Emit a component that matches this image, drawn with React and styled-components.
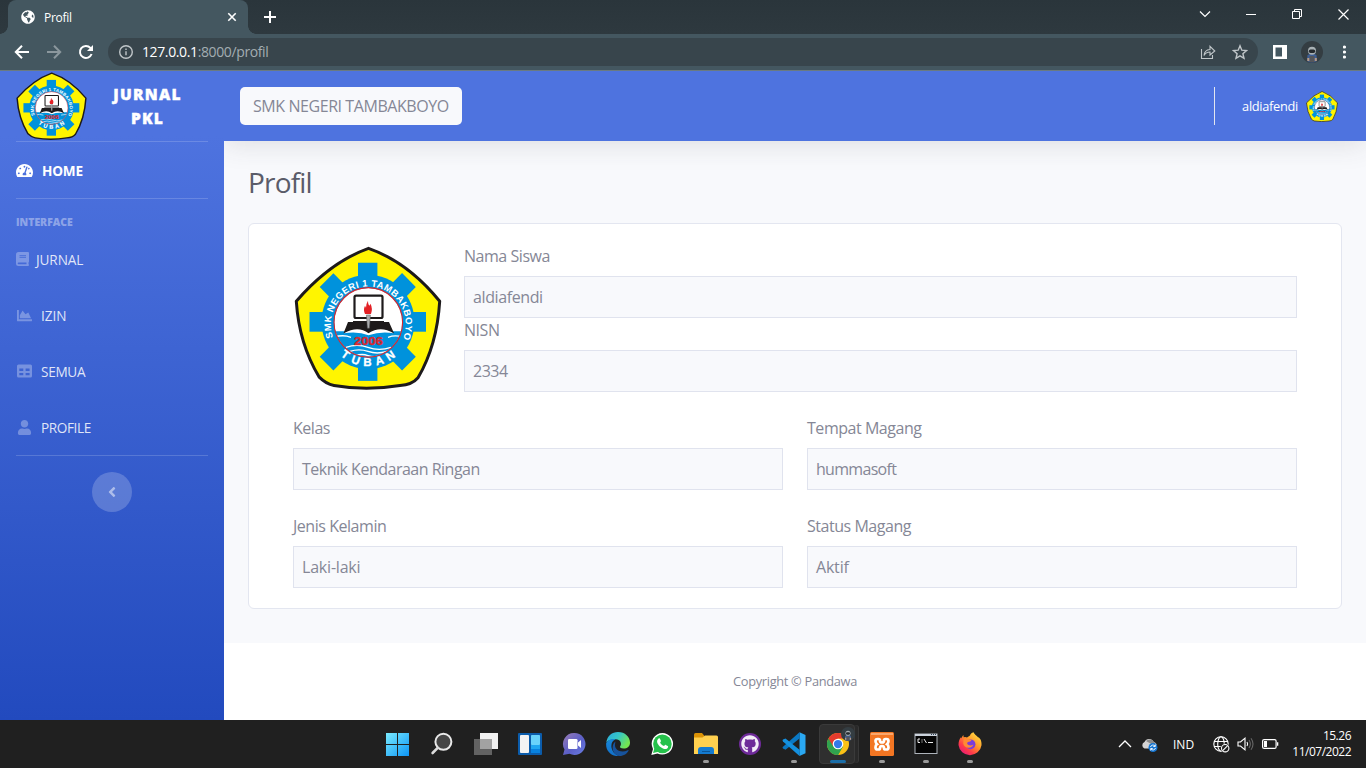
import React from "react";
import styled, { createGlobalStyle } from "styled-components";
import {
  FaTachometerAlt, FaChartArea, FaUser, FaAngleLeft,
  FaGlobeAmericas, FaGithub,
} from "react-icons/fa";

const Global = createGlobalStyle`
  *, *::before, *::after { box-sizing: border-box; }
  body { margin: 0; overflow: hidden; }
  #root { font-family: "Open Sans", "Noto Sans", "Liberation Sans", sans-serif; }
  svg { display: block; flex: none; }
`;

const Screen = styled.div`
  width: 1366px;
  height: 768px;
  display: flex;
  flex-direction: column;
  overflow: hidden;
  background: #fff;
`;

/* ---------- browser ---------- */
const TabStrip = styled.div`
  height: 34px;
  display: flex;
  align-items: flex-start;
  justify-content: space-between;
  background: linear-gradient(#2a353b, #2e393f);
`;
const TabGroup = styled.div`
  display: flex;
  align-items: center;
  height: 34px;
  padding-left: 8px;
`;
const Tab = styled.div`
  width: 240px;
  height: 34px;
  padding: 0 10px 0 13px;
  display: flex;
  align-items: center;
  border-radius: 8px 8px 0 0;
  background: #445760;
  color: #fff;
  position: relative;
  &::before, &::after {
    content: "";
    position: absolute;
    bottom: 0;
    width: 8px;
    height: 8px;
  }
  &::before { left: -8px; background: radial-gradient(circle at 0 0, transparent 7.5px, #445760 8px); }
  &::after { right: -8px; background: radial-gradient(circle at 100% 0, transparent 7.5px, #445760 8px); }
`;
const TabTitle = styled.span`
  flex: 1;
  margin-left: 9px;
  font-size: 12px;
  letter-spacing: -0.3px;
`;
const NewTab = styled.div`
  margin-left: 15px;
`;
const WindowButtons = styled.div`
  display: flex;
  align-items: center;
  height: 28px;
`;
const WindowButton = styled.div`
  width: 46px;
  display: flex;
  justify-content: center;
`;
const Toolbar = styled.div`
  height: 37px;
  display: flex;
  align-items: center;
  padding: 0 14px 1px;
  background: #445760;
  border-bottom: 1px solid #6a7a81;
`;
const NavButtons = styled.div`
  display: flex;
  gap: 16px;
  width: 94px;
`;
const AddressBar = styled.div`
  width: 1150px;
  height: 28px;
  border-radius: 14px;
  background: #38454c;
  display: flex;
  align-items: center;
  padding: 0 10px;
  gap: 8px;
`;
const Url = styled.div`
  flex: 1;
  font-size: 14px;
  letter-spacing: -0.38px;
  color: #a3adb2;
  b { font-weight: 400; color: #fff; }
`;
const BarIcons = styled.div`
  display: flex;
  gap: 16px;
`;
const ToolbarEnd = styled.div`
  display: flex;
  align-items: center;
  margin-left: 14px;
`;
const BrowserAvatar = styled.div`
  margin: 0 20px 0 14px;
`;

/* ---------- page ---------- */
const Page = styled.div`
  height: 649px;
  display: flex;
  overflow: hidden;
`;
const Sidebar = styled.aside`
  width: 224px;
  display: flex;
  flex-direction: column;
  background: linear-gradient(180deg, #4e73df 10%, #224abe 100%);
  position: relative;
  z-index: 1;
`;
const Brand = styled.div`
  height: 70px;
  padding: 0 16px;
  display: flex;
  align-items: center;
  color: #fff;
`;
const BrandName = styled.div`
  flex: 1;
  text-align: center;
  font-size: 15.5px;
  font-weight: 800;
  line-height: 24px;
  letter-spacing: 1.25px;
  -webkit-text-stroke: 0.4px #fff;
`;
const Divider = styled.hr`
  flex: none;
  width: 192px;
  height: 1px;
  margin: 0 16px;
  border: 0;
  background: rgba(255, 255, 255, 0.17);
`;
const NavItem = styled.a`
  height: 56px;
  padding: 0 16px 0 ${(p) => (p.$indent ? 17 : 16)}px;
  display: flex;
  align-items: center;
  gap: ${(p) => p.$gap || 8}px;
  font-size: 13.6px;
  letter-spacing: ${(p) => p.$spacing ?? -0.3}px;
  font-weight: ${(p) => (p.$active ? 700 : 400)};
  color: ${(p) => (p.$active ? "#fff" : "rgba(255,255,255,.85)")};
  svg { color: ${(p) => (p.$active ? "#fff" : "rgba(255,255,255,.3)")}; }
`;
const SidebarHeading = styled.div`
  height: 32px;
  padding: 16px 16px 0;
  font-size: 10.4px;
  line-height: 15px;
  font-weight: 800;
  color: rgba(255, 255, 255, 0.4);
`;
const Collapse = styled.button`
  width: 40px;
  height: 40px;
  margin: 16px auto 0;
  padding: 0;
  border: 0;
  border-radius: 50%;
  background: rgba(255, 255, 255, 0.2);
  color: rgba(255, 255, 255, 0.5);
  display: flex;
  align-items: center;
  justify-content: center;
`;
const Content = styled.div`
  flex: 1;
  display: flex;
  flex-direction: column;
`;
const Topbar = styled.header`
  height: 70px;
  flex: none;
  padding: 0 28px 0 16px;
  display: flex;
  align-items: center;
  background: #4e73df;
  box-shadow: 0 2.4px 28px rgba(58, 59, 69, 0.15);
  z-index: 0;
`;
const SchoolName = styled.div`
  width: 222px;
  height: 38px;
  border-radius: 5px;
  background: #f8f9fc;
  color: #858796;
  font-size: 16px;
  line-height: 39px;
  padding-left: 13px;
  letter-spacing: -0.43px;
  white-space: nowrap;
`;
const UserArea = styled.div`
  margin-left: auto;
  display: flex;
  align-items: center;
  height: 38px;
  padding-left: 27px;
  border-left: 1px solid #e3e6f0;
  color: #fff;
  font-size: 12.8px;
  letter-spacing: -0.3px;
  gap: 8px;
`;
const Main = styled.main`
  height: 502px;
  padding: 24px;
  background: #f8f9fc;
`;
const Title = styled.h1`
  margin: 0 0 24px;
  font-size: 28px;
  line-height: 34px;
  font-weight: 400;
  letter-spacing: -0.8px;
  color: #5a5c69;
`;
const Card = styled.section`
  height: 386px;
  padding: 20px 44px;
  border: 1px solid #e3e6f0;
  border-radius: 6px;
  background: #fff;
`;
const Identity = styled.div`
  display: flex;
  height: 172px;
`;
const Photo = styled.div`
  width: 171px;
  padding: 2px 0 0 1px;
`;
const Stack = styled.div`
  flex: 1;
`;
const Columns = styled.div`
  display: grid;
  grid-template-columns: 1fr 1fr;
  gap: 24px;
`;
const FieldBox = styled.label`
  display: block;
  font-size: 16px;
  line-height: 24px;
  letter-spacing: -0.46px;
  color: #858796;
`;
const Value = styled.div`
  height: 42px;
  margin-top: 8px;
  padding-left: 8px;
  line-height: 41px;
  border: 1px solid #e0e3ee;
  background: #f8f9fc;
  letter-spacing: ${(p) => p.$spacing ?? -0.5}px;
`;
const Footer = styled.footer`
  flex: 1;
  display: flex;
  align-items: center;
  justify-content: center;
  padding-bottom: 2px;
  background: #fff;
  color: #858796;
  font-size: 12.8px;
  letter-spacing: -0.3px;
`;

const Field = ({ label, value, spacing }) => (
  <FieldBox>{label}<Value $spacing={spacing}>{value}</Value></FieldBox>
);

const BookIcon = () => (
  <svg width="13" height="14" viewBox="0 0 13 14" fill="currentColor">
    <path fillRule="evenodd" d="M2.500 0H12q1 0 1 1v8.500q0 .6-.5.900v1.800q.5.200.5.800 0 1-1 1H2.500Q0 14 0 11.500v-9Q0 0 2.500 0zM3.500 3.300v.9h6.500v-.9zM3.500 5.200v.9h6.500v-.9zM2.500 10.600a.8.800 0 0 0 0 1.600H10.500v-1.600z" />
  </svg>
);
const TableIcon = () => (
  <svg width="15" height="14" viewBox="0 0 15 14" fill="currentColor">
    <path fillRule="evenodd" d="M1.500.500h12q1.500 0 1.500 1.500v10q0 1.500-1.500 1.500h-12Q0 13.500 0 12V2Q0 .5 1.500.500zM2.300 4.500v2.500h4V4.500zM8.600 4.500v2.500h4V4.500zM2.300 9v2.300h4V9zM8.600 9v2.300h4V9z" />
  </svg>
);

const Emblem = ({ id, width, height }) => (
  <svg width={width} height={height} viewBox="294 247 148 142" preserveAspectRatio="none">
    <defs>
      <path id={`${id}-top`} d="M333.200 337.200 A37.400 37.400 0 1 1 403.400 337.200" />
      <path id={`${id}-bottom`} d="M337.500 352.500 A43.500 43.500 0 0 0 399.500 352.500" />
      <clipPath id={`${id}-disc`}><circle cx="368.300" cy="322.300" r="34" /></clipPath>
    </defs>
    <path d="M368.500 249.300 Q408 263 439.700 301.500 Q437 345 418 377 Q412 384 400 384.500 Q366 390 334 384.500 Q326 383 319 376 Q299 343 296.300 301.500 Q330 263 368.500 249.300Z"
      fill="#fff500" stroke="#1d1a1b" strokeWidth="3" strokeLinejoin="round" />
    <g fill="#0092dc">
      {[0, 45, 90, 135].map((a) => (
        <rect key={a} x="358" y="263.500" width="19.400" height="116.500" transform={`rotate(${a} 367.700 321.800)`} />
      ))}
      <circle cx="368" cy="321.800" r="46.500" />
    </g>
    <circle cx="368.300" cy="322.300" r="34" fill="#fff" />
    <g clipPath={`url(#${id}-disc)`}>
      <path d="M330 331h77v30h-77z" fill="#0092dc" />
      <g fill="none" stroke="#fff" strokeWidth="1.300">
        <path d="M334 337q9-3 17 0M388 337q9-3 17 1M346 347q11-4 22 0t23 0M350 351q9-3 18 0t19 0M356 355q6-2 12 0t14 0" />
      </g>
      <rect x="354.500" y="296" width="28" height="22" rx="1.500" fill="#fff" stroke="#1d1a1b" strokeWidth="2.200" />
      <path d="M353 321h31v2h-31z" fill="#1d1a1b" />
      <path d="M348 322h41l5 11q-14-4-25.500 0-12-4-25 0z" fill="#1d1a1b" />
      <path d="M344 333q14-8 24.500 0 12-8 25 0-13-2-25 2-10-4-24.500-2z" fill="#fff" />
    </g>
    <path d="M366.400 315h4l-1 13h-2z" fill="#a9abae" stroke="#555" strokeWidth=".5" />
    <path d="M365 314q-2-4 0-8l1 2q0-4 2-7 0 4 1.500 5l1-2q2.500 5 .5 10z" fill="#e32126" />
    <circle cx="368.300" cy="322.300" r="34.300" fill="none" stroke="#d7282f" strokeWidth="1.100" />
    <g fontFamily="Liberation Sans, Arial, sans-serif" fontWeight="700">
      <text x="354" y="345" fontSize="11" fill="#d7282f" stroke="#d7282f" strokeWidth=".4" textLength="29" lengthAdjust="spacingAndGlyphs">2006</text>
      <text fontSize="9.300" fill="#fff" letterSpacing="0">
        <textPath href={`#${id}-top`} textLength="145">SMK NEGERI 1 TAMBAKBOYO</textPath>
      </text>
      <text fontSize="11.500" fill="#fff" stroke="#fff" strokeWidth=".3">
        <textPath href={`#${id}-bottom`} startOffset="4" textLength="60">TUBAN</textPath>
      </text>
    </g>
  </svg>
);

const Astronaut = ({ size }) => (
  <svg width={size} height={size} viewBox="0 0 22 22">
    <circle cx="11" cy="11" r="11" fill="#343d42" />
    <path d="M6.500 14q4.500-3 9 0l.5 6q-5 3-10 0z" fill="#3e5f96" />
    <path d="M8.500 15h5v6h-5z" fill="#54565b" />
    <circle cx="11" cy="9.800" r="4" fill="#a9b1b5" />
    <rect x="7.800" y="8.400" width="6.400" height="3.600" rx="1.700" fill="#252a2e" />
    <path d="M6.300 17h2v3h-2zM13.800 17h2v3h-2z" fill="#b89b86" />
  </svg>
);

/* ---------- taskbar ---------- */
const Taskbar = styled.div`
  height: 48px;
  display: flex;
  align-items: center;
  padding: 0 15px 0 376px;
  background: #202020;
  color: #fff;
`;
const Apps = styled.div`
  display: flex;
`;
const AppSlot = styled.div`
  width: 44px;
  height: 48px;
  display: flex;
  align-items: center;
  justify-content: center;
  position: relative;
  &::after {
    content: "";
    position: absolute;
    bottom: 5px;
    left: 50%;
    transform: translateX(-50%);
    width: ${(p) => (p.$active ? 16 : 6)}px;
    height: 3px;
    border-radius: 2px;
    background: ${(p) => (p.$active ? "#1b6ea8" : "#9a9a9a")};
    display: ${(p) => (p.$active || p.$open ? "block" : "none")};
  }
`;
const ActiveTile = styled.div`
  width: 36px;
  height: 40px;
  margin-left: -2px;
  border-radius: 4px;
  background: #2f2f2f;
  border: 1px solid #3a3a3a;
  box-shadow: 4px 0 0 -1px #292929, 5px 0 0 -1px #383838;
  display: flex;
  align-items: center;
  justify-content: center;
  padding-left: 2px;
`;
const AppBadge = styled.div`
  position: absolute;
  top: 7px;
  right: 5px;
`;
const Tray = styled.div`
  margin-left: auto;
  display: flex;
  align-items: center;
`;
const TrayItem = styled.div`
  margin-right: ${(p) => p.$after}px;
`;
const Language = styled.div`
  width: 22px;
  margin-right: 18px;
  font-size: 12px;
  white-space: nowrap;
`;
const Clock = styled.div`
  width: 63px;
  text-align: right;
  font-size: 12px;
  line-height: 16px;
  letter-spacing: -0.5px;
  white-space: nowrap;
`;

const StartIcon = () => (
  <svg width="24" height="24" viewBox="0 0 24 24">
    <defs><linearGradient id="win" x1="0" y1="0" x2="24" y2="24" gradientUnits="userSpaceOnUse">
      <stop offset="0" stopColor="#7cecff" /><stop offset="1" stopColor="#0a93f5" />
    </linearGradient></defs>
    <path d="M0 1h11v11H0zM12 1h11v11H12zM0 13h11v11H0zM12 13h11v11H12z" fill="url(#win)" />
  </svg>
);
const SearchIcon = () => (
  <svg width="24" height="24" viewBox="0 0 24 24" fill="none">
    <circle cx="13.400" cy="9.800" r="8" fill="#454545" stroke="#e9e9e9" strokeWidth="2" />
    <path d="M7.700 15.800 2.600 21" stroke="#dcdcdc" strokeWidth="2.600" strokeLinecap="round" />
  </svg>
);
const TaskViewIcon = () => (
  <svg width="24" height="24" viewBox="0 0 24 24">
    <rect x="6" y="1" width="18" height="16" fill="#f1f1f1" />
    <rect x="0" y="7" width="18" height="16" fill="#626262" />
    <rect x="6" y="7" width="12" height="10" fill="#a2a2a2" />
  </svg>
);
const WidgetsIcon = () => (
  <svg width="24" height="24" viewBox="0 0 24 24">
    <rect y="1" width="24" height="22" rx="1" fill="#0b5cab" />
    <rect x="2" y="3" width="9" height="18" rx="1" fill="#f3f3f3" />
    <rect x="13" y="3" width="9" height="10" rx=".7" fill="#69d3fb" />
    <path d="M13 13h9v4h-9z" fill="#1fa6f0" /><path d="M13 17h9v4h-9z" fill="#0882df" />
  </svg>
);
const ChatIcon = () => (
  <svg width="24" height="24" viewBox="0 0 24 24">
    <defs><linearGradient id="chat" x1="0" y1="0" x2="1" y2="1">
      <stop offset="0" stopColor="#9a7cb5" /><stop offset=".55" stopColor="#5b5fc7" /><stop offset="1" stopColor="#6a7fe5" />
    </linearGradient></defs>
    <path d="M12.500 1a11 11 0 1 1-5 20.800L1 23l1.500-5.500A11 11 0 0 1 12.500 1z" fill="url(#chat)" />
    <rect x="6" y="7" width="9.500" height="10" rx="1.300" fill="#fff" />
    <path d="m16 10.500 3-2.500v8l-3-2.500z" fill="#fff" />
  </svg>
);
const EdgeIcon = () => (
  <svg width="24" height="24" viewBox="0 0 24 24">
    <defs>
      <linearGradient id="edge1" x1="0" y1="0" x2="1" y2=".5">
        <stop offset="0" stopColor="#2aa9df" /><stop offset=".5" stopColor="#35c6c8" /><stop offset="1" stopColor="#74e750" />
      </linearGradient>
      <linearGradient id="edge2" x1="0" y1="0" x2="0" y2="1">
        <stop offset="0" stopColor="#1787d8" /><stop offset="1" stopColor="#1270ca" />
      </linearGradient>
    </defs>
    <path d="M.3 10.500C1.200 4 6 0 12 0c7 0 12 5 12 10.500 0 4-2.800 6-6.300 6-3.200 0-4.300-1.100-3.500-2.200 2-2.600.2-7-4.400-7C5.500 7.300 2 8.500.3 10.500z" fill="url(#edge1)" />
    <path d="M.2 11C2 7.500 6 6.500 9.500 7.300 6 9 5 12 5.500 15.500 6.300 20 9.500 23 13.500 24 5 25-.7 18.500.2 11z" fill="url(#edge2)" />
    <path d="M9.500 9.500c-5 3.500-3.500 13.500 4 14.500 4.500 0 7.500-2.500 9-5.300.3-.7-.2-.9-.8-.5-6 2.800-12.700.5-12.700-5.200 0-1.300.2-2.500.5-3.500z" fill="#17539c" />
  </svg>
);
const WhatsAppIcon = () => (
  <svg width="24" height="24" viewBox="0 0 24 24">
    <path d="M12.500 1a10.800 10.800 0 1 1-5 20.500L1.300 23 3 17A10.800 10.800 0 0 1 12.500 1z" fill="#fff" />
    <circle cx="12.400" cy="11.900" r="9.300" fill="#25c24b" /><path d="m3 21 1.500-5 4 3.700z" fill="#25c24b" />
    <path d="M8.600 6.600c.6-.5 1.200-.4 1.500.3l.8 1.800c.2.500-.1.900-.8 1.700.8 1.700 2.200 3 4 3.700.8-1 1.100-1.400 1.600-1.200l2 1c.6.300.5.900.2 1.600-.6 1.300-2.100 1.800-3.600 1.400-3.600-.9-6.800-4-7.200-7.100-.1-1.300.5-2.400 1.500-3.200z" fill="#fff" />
  </svg>
);
const FolderIcon = () => (
  <svg width="24" height="24" viewBox="0 0 24 24">
    <path d="M0 2.500Q0 1 1.500 1H8l2.500 3v4H0z" fill="#db9205" />
    <path d="M0 5.500h8.500L11 3.500h11.500Q24 3.500 24 5v17H0z" fill="#ffd04f" />
    <path d="M4 22v-4q0-3 3-3h10q3 0 3 3v4z" fill="#147bd1" /><path d="M8 19h8v1H8z" fill="#0c5596" />
  </svg>
);
const GithubBadge = styled.div`
  width: 22px;
  height: 22px;
  border-radius: 50%;
  display: flex;
  align-items: center;
  justify-content: center;
  background: #6e2a99;
  color: #f3ecf7;
`;
const CodeIcon = () => (
  <svg width="24" height="24" viewBox="0 0 24 24">
    <path d="m17.500.2 6 2.700v18.300l-6 2.700z" fill="#2aa8f2" />
    <path d="m17.500.2.3 6L3.500 17.700 1 16.500q-1-.8 0-1.800z" fill="#0a78c4" />
    <path d="m17.500 23.900.3-6L3.500 6.400 1 7.600q-1 .8 0 1.800z" fill="#1490df" />
  </svg>
);
const ChromeIcon = () => (
  <svg width="22" height="22" viewBox="0 0 24 24">
    <circle cx="12" cy="12" r="12" fill="#fbc116" />
    <path d="M12 12 1.600 6A12 12 0 0 0 12 24l5.200-9z" fill="#30a34f" />
    <path d="M1.600 6a12 12 0 0 1 20.800 0H12l-5 9z" fill="#e33b2e" />
    <path d="M12 24l5.200-9L12 12l-5 3z" fill="#30a34f" />
    <circle cx="12" cy="12" r="5.800" fill="#fff" /><circle cx="12" cy="12" r="4.500" fill="#3479ea" />
  </svg>
);
const XamppIcon = () => (
  <svg width="24" height="24" viewBox="0 0 24 24">
    <rect width="24" height="24" rx="1.500" fill="#f37623" /><path d="M1 1h22v2H1z" fill="#f9a66c" />
    <path d="M7.500 7h1q1.500 0 1.500 1.500 0 2 2 2t2-2Q14 7 15.500 7h1q2 0 2 2 0 1.800-1.500 3.200 1.500 1 1.500 3 0 2.300-2 2.300h-1q-1.500 0-1.500-1.500 0-2-2-2t-2 2q0 1.500-1.500 1.500h-1q-2 0-2-2.300 0-2 1.500-3Q5.500 10.800 5.500 9q0-2 2-2z" fill="none" stroke="#fff" strokeWidth="2.700" />
  </svg>
);
const TerminalIcon = () => (
  <svg width="24" height="24" viewBox="0 0 24 24">
    <rect x="1" y="2" width="22" height="19.500" fill="#050505" stroke="#aeb4bb" />
    <path d="M1 2h22v2H1z" fill="#cbd2db" /><path d="M17 2.500h1M19 2.500h1M21 2.500h1" stroke="#345" />
    <path d="M6 7H4v3.500h2M8 7.500v1M8 9.500v1M10 7l2.500 4M14 10.500h5" stroke="#eee" fill="none" />
  </svg>
);
const FirefoxIcon = () => (
  <svg width="24" height="24" viewBox="0 0 24 24">
    <defs><linearGradient id="ff" x1="1" y1="0" x2=".2" y2="1">
      <stop offset="0" stopColor="#fff14a" /><stop offset=".45" stopColor="#ff9a2a" /><stop offset=".75" stopColor="#ff3b49" /><stop offset="1" stopColor="#e3187a" />
    </linearGradient></defs>
    <path d="M15.500.2c1 2.300 3 3.200 4.500 5 1.500-.2 4 3.500 3.500 8A11.600 11.600 0 0 1 .5 13c0-3.500 1-6 2.300-7.800L3 6.500 5.300 3l.4 2.200q1.800-.5 3.300.2l3-1.900c.2-1.500 1.800-2.900 3.500-3.300z" fill="url(#ff)" />
    <circle cx="12.500" cy="12.300" r="4.900" fill="#7a3ddb" />
    <path d="M5.700 6.500q3-1 4.500.8l3.300.7q-.7 2-3.500 2-2 1.700.5 3 2.500 1 5-.5-1 3-5 3.300-4.500-.4-5.300-4.300z" fill="#ff8a32" />
  </svg>
);

const apps = [
  { icon: <StartIcon /> }, { icon: <SearchIcon /> }, { icon: <TaskViewIcon /> },
  { icon: <WidgetsIcon /> }, { icon: <ChatIcon /> }, { icon: <EdgeIcon /> },
  { icon: <WhatsAppIcon /> }, { icon: <FolderIcon />, open: true },
  { icon: <GithubBadge><FaGithub size={18} /></GithubBadge> },
  { icon: <CodeIcon />, open: true },
  { icon: <ActiveTile><ChromeIcon /></ActiveTile>, active: true },
  { icon: <XamppIcon />, open: true }, { icon: <TerminalIcon />, open: true },
  { icon: <FirefoxIcon />, open: true },
];

export default function App() {
  return (
    <Screen>
      <Global />
      <TabStrip>
        <TabGroup>
          <Tab>
            <FaGlobeAmericas size={14} />
            <TabTitle>Profil</TabTitle>
            <svg width="12" height="12" viewBox="0 0 12 12" stroke="#fff" strokeWidth="1.600"><path d="m2.300 2.300 7.400 7.400M9.700 2.300 2.300 9.700" /></svg>
          </Tab>
          <NewTab><svg width="14" height="14" viewBox="0 0 14 14" stroke="#fff" strokeWidth="2"><path d="M7 1v12M1 7h12" /></svg></NewTab>
        </TabGroup>
        <WindowButtons>
          <WindowButton><svg width="12" height="8" viewBox="0 0 12 8" fill="none" stroke="#fff" strokeWidth="1.200"><path d="m1 1.500 5 5 5-5" /></svg></WindowButton>
          <WindowButton><svg width="10" height="10" viewBox="0 0 10 10" stroke="#fff"><path d="M0 5.500h10" /></svg></WindowButton>
          <WindowButton><svg width="10" height="10" viewBox="0 0 10 10" fill="none" stroke="#fff"><path d="M.5 2.500h7v7h-7zM2.500 2.500v-2h7v7h-2" /></svg></WindowButton>
          <WindowButton><svg width="11" height="11" viewBox="0 0 11 11" stroke="#fff" strokeWidth="1.200"><path d="m.5.500 10 10M10.500.5l-10 10" /></svg></WindowButton>
        </WindowButtons>
      </TabStrip>
      <Toolbar>
        <NavButtons>
          <svg width="16" height="16" viewBox="0 0 16 16" fill="none" stroke="#fff" strokeWidth="2"><path d="M15 8H2.500M8 1.800 1.800 8 8 14.200" /></svg>
          <svg width="16" height="16" viewBox="0 0 16 16" fill="none" stroke="#8b979d" strokeWidth="2"><path d="M1 8h12.500M8 1.800 14.200 8 8 14.200" /></svg>
          <svg width="16" height="16" viewBox="0 0 16 16" fill="none" stroke="#fff" strokeWidth="2"><path d="M13.600 10A6 6 0 1 1 12.400 3.900L14 5.500" /><path d="M15 1v6H9z" fill="#fff" stroke="none" /></svg>
        </NavButtons>
        <AddressBar>
          <svg width="16" height="16" viewBox="0 0 16 16" fill="none" stroke="#c0c6c9" strokeWidth="1.400"><circle cx="8" cy="8" r="6.300" /><path d="M8 7.200v4M8 4.500V6" /></svg>
          <Url><b>127.0.0.1</b>:8000/profil</Url>
          <BarIcons>
            <svg width="16" height="16" viewBox="0 0 16 16" fill="none" stroke="#c0c6c9" strokeWidth="1.100"><path d="M1.500 5v9.500h11V11" /><path d="M4 11.500q.5-5.500 6-6V2.300L14.800 7 10 11V8q-4 0-6 3.500z" /></svg>
            <svg width="16" height="16" viewBox="0 0 16 16" fill="none" stroke="#c0c6c9" strokeWidth="1.400"><path d="m8 1.800 1.800 4.400 4.700.4-3.600 3.100 1.100 4.600L8 11.800l-4 2.500 1.100-4.600L1.500 6.600l4.700-.4z" /></svg>
          </BarIcons>
        </AddressBar>
        <ToolbarEnd>
          <svg width="15" height="14" viewBox="0 0 15 14"><path d="M1 0h14v14H1zM3.500 2.500v9H10v-9z" fill="#fff" fillRule="evenodd" /></svg>
          <BrowserAvatar><Astronaut size={22} /></BrowserAvatar>
          <svg width="4" height="14" viewBox="0 0 4 14" fill="#fff"><circle cx="1.500" cy="2" r="1.600" /><circle cx="1.500" cy="7" r="1.600" /><circle cx="1.500" cy="12" r="1.600" /></svg>
        </ToolbarEnd>
      </Toolbar>

      <Page>
        <Sidebar>
          <Brand>
            <Emblem id="brand" width="71" height="68" />
            <BrandName>JURNAL<br />PKL</BrandName>
          </Brand>
          <Divider />
          <NavItem $active $gap={9} $spacing={-0.2}><FaTachometerAlt size={17} />HOME</NavItem>
          <Divider />
          <SidebarHeading>INTERFACE</SidebarHeading>
          <NavItem $gap={7} $spacing={-0.1}><BookIcon />JURNAL</NavItem>
          <NavItem $indent $gap={9} $spacing={0}><FaChartArea size={15} />IZIN</NavItem>
          <NavItem $indent $gap={9}><TableIcon />SEMUA</NavItem>
          <NavItem $indent $gap={9} $spacing={-0.4}><FaUser size={15} />PROFILE</NavItem>
          <Divider />
          <Collapse><FaAngleLeft size={16} /></Collapse>
        </Sidebar>
        <Content>
          <Topbar>
            <SchoolName>SMK NEGERI TAMBAKBOYO</SchoolName>
            <UserArea>aldiafendi<Emblem id="user" width="32" height="31" /></UserArea>
          </Topbar>
          <Main>
            <Title>Profil</Title>
            <Card>
              <Identity>
                <Photo><Emblem id="photo" width="148" height="144" /></Photo>
                <Stack>
                  <Field label="Nama Siswa" value="aldiafendi" spacing={-0.4} />
                  <Field label="NISN" value="2334" />
                </Stack>
              </Identity>
              <Columns>
                <Field label="Kelas" value="Teknik Kendaraan Ringan" />
                <Field label="Tempat Magang" value="hummasoft" spacing={-0.7} />
                <Field label="Jenis Kelamin" value="Laki-laki" spacing={-0.2} />
                <Field label="Status Magang" value="Aktif" spacing={-0.2} />
              </Columns>
            </Card>
          </Main>
          <Footer>Copyright © Pandawa</Footer>
        </Content>
      </Page>

      <Taskbar>
        <Apps>
          {apps.map((a, i) => (
            <AppSlot key={i} $open={a.open} $active={a.active}>
              {a.icon}
              {a.active && <AppBadge><Astronaut size={14} /></AppBadge>}
            </AppSlot>
          ))}
        </Apps>
        <Tray>
          <TrayItem $after={9}><svg width="14" height="8" viewBox="0 0 14 8" fill="none" stroke="#fff" strokeWidth="1.300"><path d="M1 7l6-6 6 6" /></svg></TrayItem>
          <TrayItem $after={15}>
            <svg width="17" height="16" viewBox="0 0 17 16">
              <path d="M3.500 12.500a3.500 3.500 0 0 1 0-6.500 5 5 0 0 1 9.200 0q3 1 3 3.500l-5 3z" fill="#d4d4d4" />
              <path d="M5 5a5 5 0 0 1 8 1l2 2-3 1z" fill="#8b8b8b" />
              <circle cx="12" cy="11.500" r="4.500" fill="#1676d2" />
              <path d="M9.500 11a2.600 2.600 0 0 1 4.500-1M14.500 12a2.600 2.600 0 0 1-4.500 1M14.300 8.500V10.500h-2M9.700 14.500v-2h2" fill="none" stroke="#fff" strokeWidth=".9" />
            </svg>
          </TrayItem>
          <Language>IND</Language>
          <TrayItem $after={7}>
            <svg width="17" height="17" viewBox="0 0 17 17" fill="none" stroke="#fff" strokeWidth="1.100">
              <circle cx="8" cy="8" r="7.200" /><ellipse cx="8" cy="8" rx="3.300" ry="7.200" /><path d="M1 5.500h14M1 10.500h14" />
              <circle cx="12.200" cy="12.200" r="4.800" fill="#202020" stroke="none" /><circle cx="12.200" cy="12.200" r="3.700" /><path d="m9.700 14.700 5-5" />
            </svg>
          </TrayItem>
          <TrayItem $after={8}>
            <svg width="17" height="14" viewBox="0 0 17 14" fill="none" stroke="#fff" strokeWidth="1.100">
              <path d="M1 5h2.500L8 1.200v11.600L3.500 9H1z" /><path d="M10 5q1.300 2 0 4" /><path d="M12 3q2.700 4 0 8M14 1.200q4 5.800 0 11.600" stroke="#666" />
            </svg>
          </TrayItem>
          <TrayItem $after={9}>
            <svg width="17" height="10" viewBox="0 0 17 10"><rect x=".6" y=".6" width="13.500" height="8.800" rx="1.500" fill="none" stroke="#fff" strokeWidth="1.200" /><path d="M2 2h3v6H2zM15 3.300h1.300v3.400H15z" fill="#fff" /></svg>
          </TrayItem>
          <Clock>15.26<br />11/07/2022</Clock>
        </Tray>
      </Taskbar>
    </Screen>
  );
}
